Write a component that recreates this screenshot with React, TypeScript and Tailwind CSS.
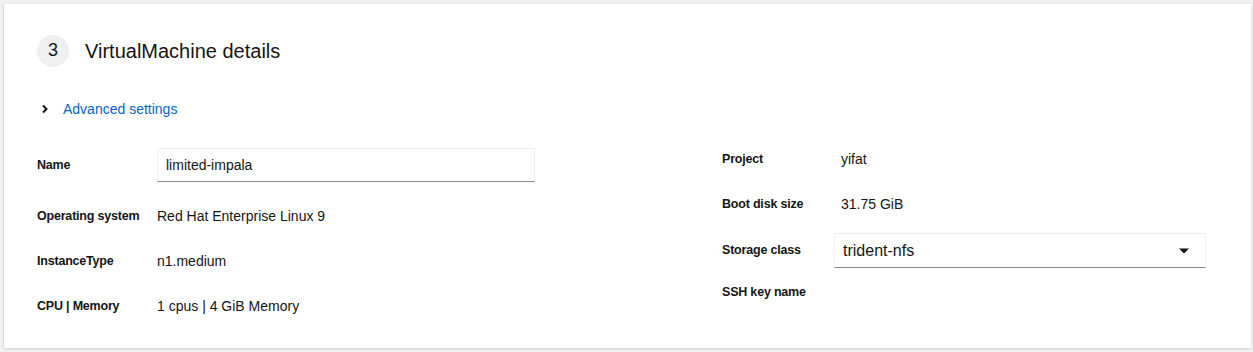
import React from "react";

const font = { fontFamily: '"Liberation Sans", Arial, sans-serif' };

function Label({ children, w }: { children: React.ReactNode; w: string }) {
  return <div className={`${w} shrink-0 text-[12.5px] tracking-[-0.2px] font-bold text-[#151515]`}>{children}</div>;
}

export default function App() {
  return (
    <div className="w-full h-[352px] bg-[#f0f0f0] pt-[4px] pl-[4px] pr-[2px] pb-[4px]" style={font}>
      <div className="h-[344px] bg-white shadow-[0_1px_2px_rgba(0,0,0,0.12),-1px_0_1px_rgba(0,0,0,0.06)] pl-[33px] pr-[20px]">
        {/* Header */}
        <div className="flex items-center pt-[30px] h-[63px]">
          <div className="w-[32px] h-[32px] rounded-full bg-[#f0f0f0] flex items-center justify-center text-[18px] text-[#151515]">
            3
          </div>
          <div className="ml-[16px] text-[20px] text-[#151515]">VirtualMachine details</div>
        </div>

        {/* Advanced settings */}
        <div className="flex items-center mt-[32px] h-[20px]">
          <svg width="10" height="10" viewBox="0 0 10 10" className="ml-[3px]">
            <path d="M3 1.5 L6.5 5 L3 8.5" fill="none" stroke="#151515" strokeWidth="2" />
          </svg>
          <span className="ml-[13px] text-[14px] text-[#0066cc]">Advanced settings</span>
        </div>

        {/* Form */}
        <div className="flex mt-[29px]">
          {/* Left column */}
          <div className="w-[685px] shrink-0 flex flex-col">
            <div className="flex items-center h-[34px]">
              <Label w="w-[120px]">Name</Label>
              <div className="w-[378px] h-[34px] border border-[#f0f0f0] border-b-[#8a8d90] flex items-center px-[8px] text-[14px] text-[#151515]">
                limited-impala
              </div>
            </div>
            <div className="flex items-center h-[20px] mt-[24px]">
              <Label w="w-[120px]">Operating system</Label>
              <div className="text-[14px] text-[#151515]">Red Hat Enterprise Linux 9</div>
            </div>
            <div className="flex items-center h-[20px] mt-[25px]">
              <Label w="w-[120px]">InstanceType</Label>
              <div className="text-[14px] text-[#151515]">n1.medium</div>
            </div>
            <div className="flex items-center h-[20px] mt-[25px]">
              <Label w="w-[120px]">CPU | Memory</Label>
              <div className="text-[14px] text-[#151515]">1 cpus | 4 GiB Memory</div>
            </div>
          </div>

          {/* Right column */}
          <div className="flex flex-col">
            <div className="flex items-center h-[20px] mt-[1px]">
              <Label w="w-[119px]">Project</Label>
              <div className="text-[14px] text-[#151515]">yifat</div>
            </div>
            <div className="flex items-center h-[20px] mt-[25px]">
              <Label w="w-[119px]">Boot disk size</Label>
              <div className="text-[14px] text-[#151515]">31.75 GiB</div>
            </div>
            <div className="flex items-center h-[35px] mt-[19px]">
              <Label w="w-[112px]">Storage class</Label>
              <div className="w-[372px] h-[35px] border border-[#f0f0f0] border-b-[#8a8d90] flex items-center justify-between pl-[8px] pr-[15px] text-[16px] text-[#151515]">
                <span>trident-nfs</span>
                <svg width="12" height="8" viewBox="0 0 12 8">
                  <path d="M1 1.5 H11 L6 6.5 Z" fill="#151515" />
                </svg>
              </div>
            </div>
            <div className="flex items-center h-[20px] mt-[14px]">
              <Label w="w-[119px]">SSH key name</Label>
            </div>
          </div>
        </div>
      </div>
    </div>
  );
}
